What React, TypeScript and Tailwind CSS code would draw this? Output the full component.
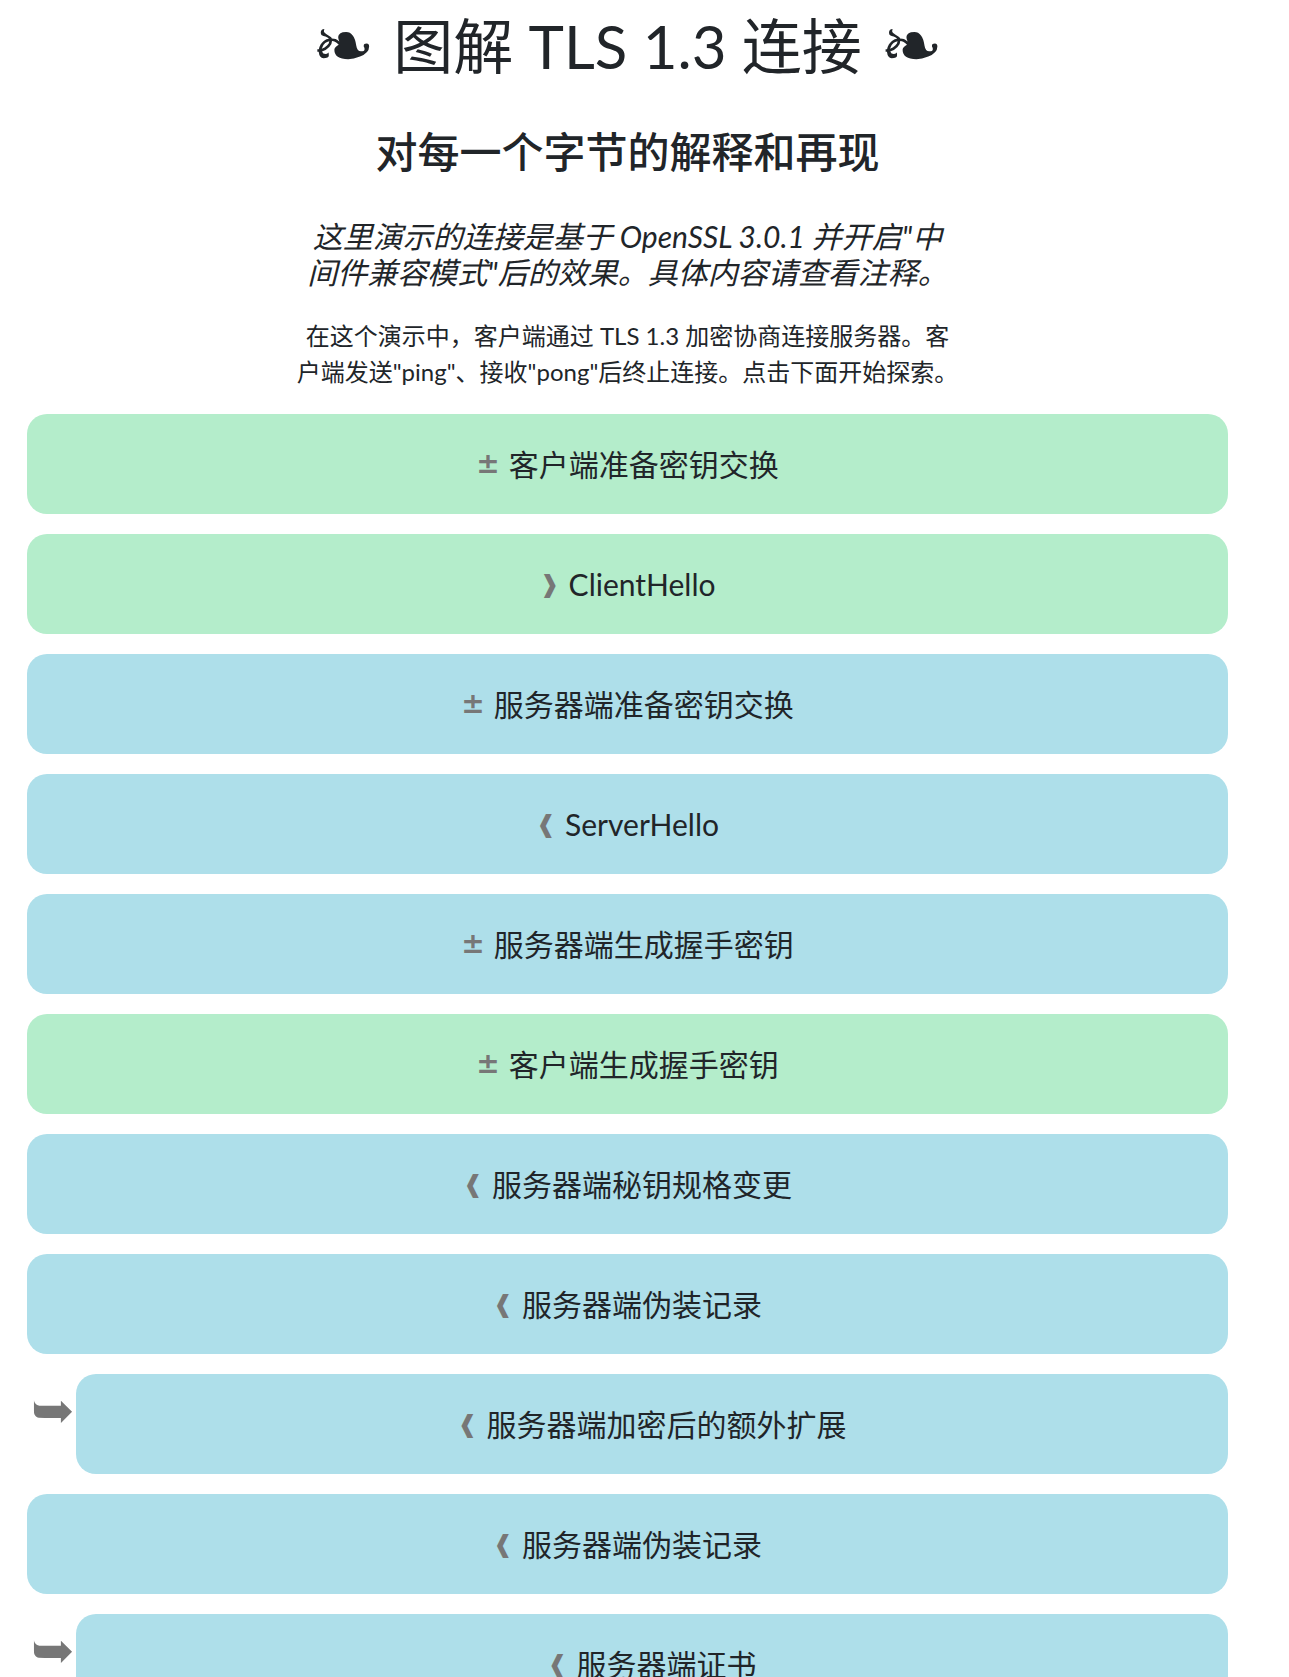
import React from "react";

type Step = {
  icon: string;
  label: string;
  side: "client" | "server";
  nested?: boolean;
};

const steps: Step[] = [
  { icon: "±", label: "客户端准备密钥交换", side: "client" },
  { icon: "❱", label: "ClientHello", side: "client" },
  { icon: "±", label: "服务器端准备密钥交换", side: "server" },
  { icon: "❰", label: "ServerHello", side: "server" },
  { icon: "±", label: "服务器端生成握手密钥", side: "server" },
  { icon: "±", label: "客户端生成握手密钥", side: "client" },
  { icon: "❰", label: "服务器端秘钥规格变更", side: "server" },
  { icon: "❰", label: "服务器端伪装记录", side: "server" },
  { icon: "❰", label: "服务器端加密后的额外扩展", side: "server", nested: true },
  { icon: "❰", label: "服务器端伪装记录", side: "server" },
  { icon: "❰", label: "服务器端证书", side: "server", nested: true },
  { icon: "❰", label: "服务器端伪装记录", side: "server" },
  { icon: "❰", label: "服务器端证书验证", side: "server", nested: true },
];

function StepCard({ step, grow }: { step: Step; grow?: boolean }) {
  const bg = step.side === "client" ? "bg-[#b4edcb]" : "bg-[#aedfea]";
  const iconClass =
    step.icon === "±"
      ? "mr-[9px] font-['DejaVu_Sans',sans-serif] text-[28px] font-bold text-[#777777]"
      : "mr-[9px] font-['DejaVu_Sans',sans-serif] text-[24px] text-[#777777]";
  return (
    <div
      className={`${bg} ${grow ? "flex-1" : ""} flex h-[100px] items-center justify-center rounded-[20px] text-[30px] leading-[36px] text-[#212529]`}
    >
      <span className={iconClass}>{step.icon}</span>
      <span>{step.label}</span>
    </div>
  );
}

function StepRow({ step }: { step: Step }) {
  if (!step.nested) return <StepCard step={step} />;
  return (
    <div className="flex">
      <div className="w-[49px] shrink-0 pl-[4px] pt-[10px] font-['DejaVu_Sans',sans-serif] text-[52px] leading-[52px] text-[#777777]">
        ➥
      </div>
      <StepCard step={step} grow />
    </div>
  );
}

export default function App() {
  return (
    <div className="min-h-screen bg-white pl-[27px] pr-[61px] font-['Lato','Noto_Sans_CJK_SC',sans-serif] text-[#212529]">
      <header className="flex flex-col items-center pt-[10px] text-center">
        <h1 className="flex items-center gap-[18px] text-[60px] leading-[72px] font-normal">
          <span className="font-['DejaVu_Sans',sans-serif] text-[76px] leading-[72px]">❧</span>
          <span>图解 TLS 1.3 连接</span>
          <span className="font-['DejaVu_Sans',sans-serif] text-[76px] leading-[72px]">❧</span>
        </h1>
        <h2 className="mt-[46px] text-[42px] leading-[48px] font-medium">
          对每一个字节的解释和再现
        </h2>
        <p className="mt-[42px] text-[30px] leading-[36px] italic">
          这里演示的连接是基于 OpenSSL 3.0.1 并开启"中
          <br />
          间件兼容模式"后的效果。具体内容请查看注释。
        </p>
        <p className="mt-[28px] text-[24px] leading-[36px]">
          在这个演示中，客户端通过 TLS 1.3 加密协商连接服务器。客
          <br />
          户端发送"ping"、接收"pong"后终止连接。点击下面开始探索。
        </p>
      </header>
      <main className="mt-[24px] flex flex-col gap-[20px] pb-[40px]">
        {steps.map((s, i) => (
          <StepRow key={i} step={s} />
        ))}
      </main>
    </div>
  );
}
